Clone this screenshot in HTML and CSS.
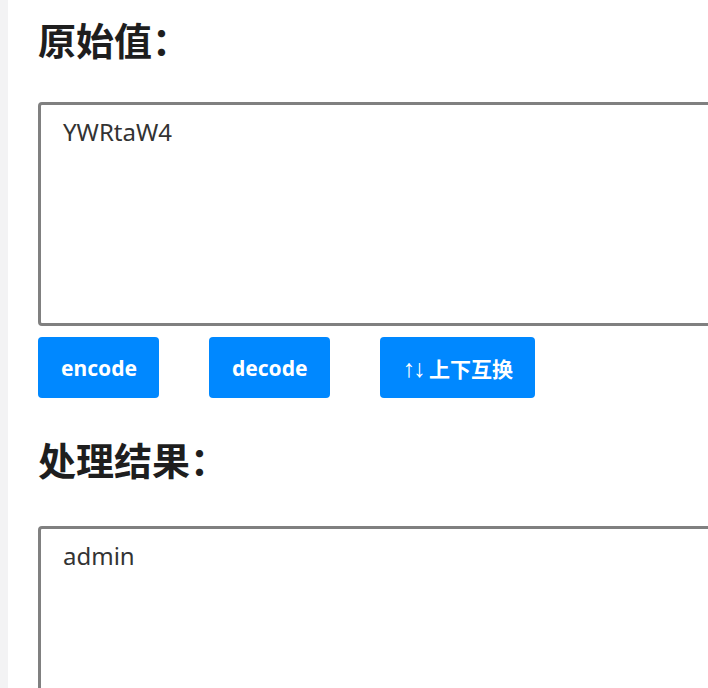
FILE: index.html
```html
<!DOCTYPE html>
<html lang="zh-CN">
<head>
<meta charset="utf-8">
<title>Base64</title>
<link rel="stylesheet" href="styles.css">
</head>
<body>
<main class="page">
  <h2 class="title title-first">原始值：</h2>
  <textarea class="box">YWRtaW4</textarea>
  <div class="actions">
    <button class="btn">encode</button>
    <button class="btn">decode</button>
    <button class="btn"><span class="arrows">↑↓</span> 上下互换</button>
  </div>
  <h2 class="title title-second">处理结果：</h2>
  <textarea class="box">admin</textarea>
</main>
</body>
</html>
```
FILE: styles.css
```css
html, body {
  margin: 0;
  padding: 0;
}
body {
  background: #f3f3f4;
  font-family: "Noto Sans", "Noto Sans CJK SC", sans-serif;
  color: #222;
  overflow: hidden;
}
.page {
  margin-left: 8px;
  background: #fff;
  min-height: 100vh;
  padding: 0 0 0 30px;
}
.title {
  font-family: "Noto Sans CJK SC", sans-serif;
  font-size: 38px;
  font-weight: 700;
  line-height: 57px;
  margin: 0;
  color: #1e1e1e;
}
.title-first {
  padding-top: 10px;
  margin-bottom: 35px;
}
.title-second {
  margin-top: 32px;
  margin-bottom: 39px;
}
.box {
  display: block;
  box-sizing: border-box;
  width: 720px;
  height: 224px;
  border: 3px solid #808080;
  border-radius: 4px;
  padding: 11px 22px;
  font-family: "Noto Sans", "Noto Sans CJK SC", sans-serif;
  font-size: 24px;
  line-height: 32px;
  color: #333;
  resize: none;
  outline: none;
}
.actions {
  display: flex;
  gap: 50px;
  margin-top: 11px;
}
.btn {
  height: 61px;
  padding: 0 22px 0 23px;
  border: none;
  border-radius: 4px;
  background: #0088ff;
  color: #fff;
  font-family: "Noto Sans", "Noto Sans CJK SC", sans-serif;
  font-size: 21px;
  font-weight: 700;
}
.arrows {
  font-family: "Liberation Sans", sans-serif;
  font-size: 25px;
  font-weight: 400;
  letter-spacing: -2px;
}
```
